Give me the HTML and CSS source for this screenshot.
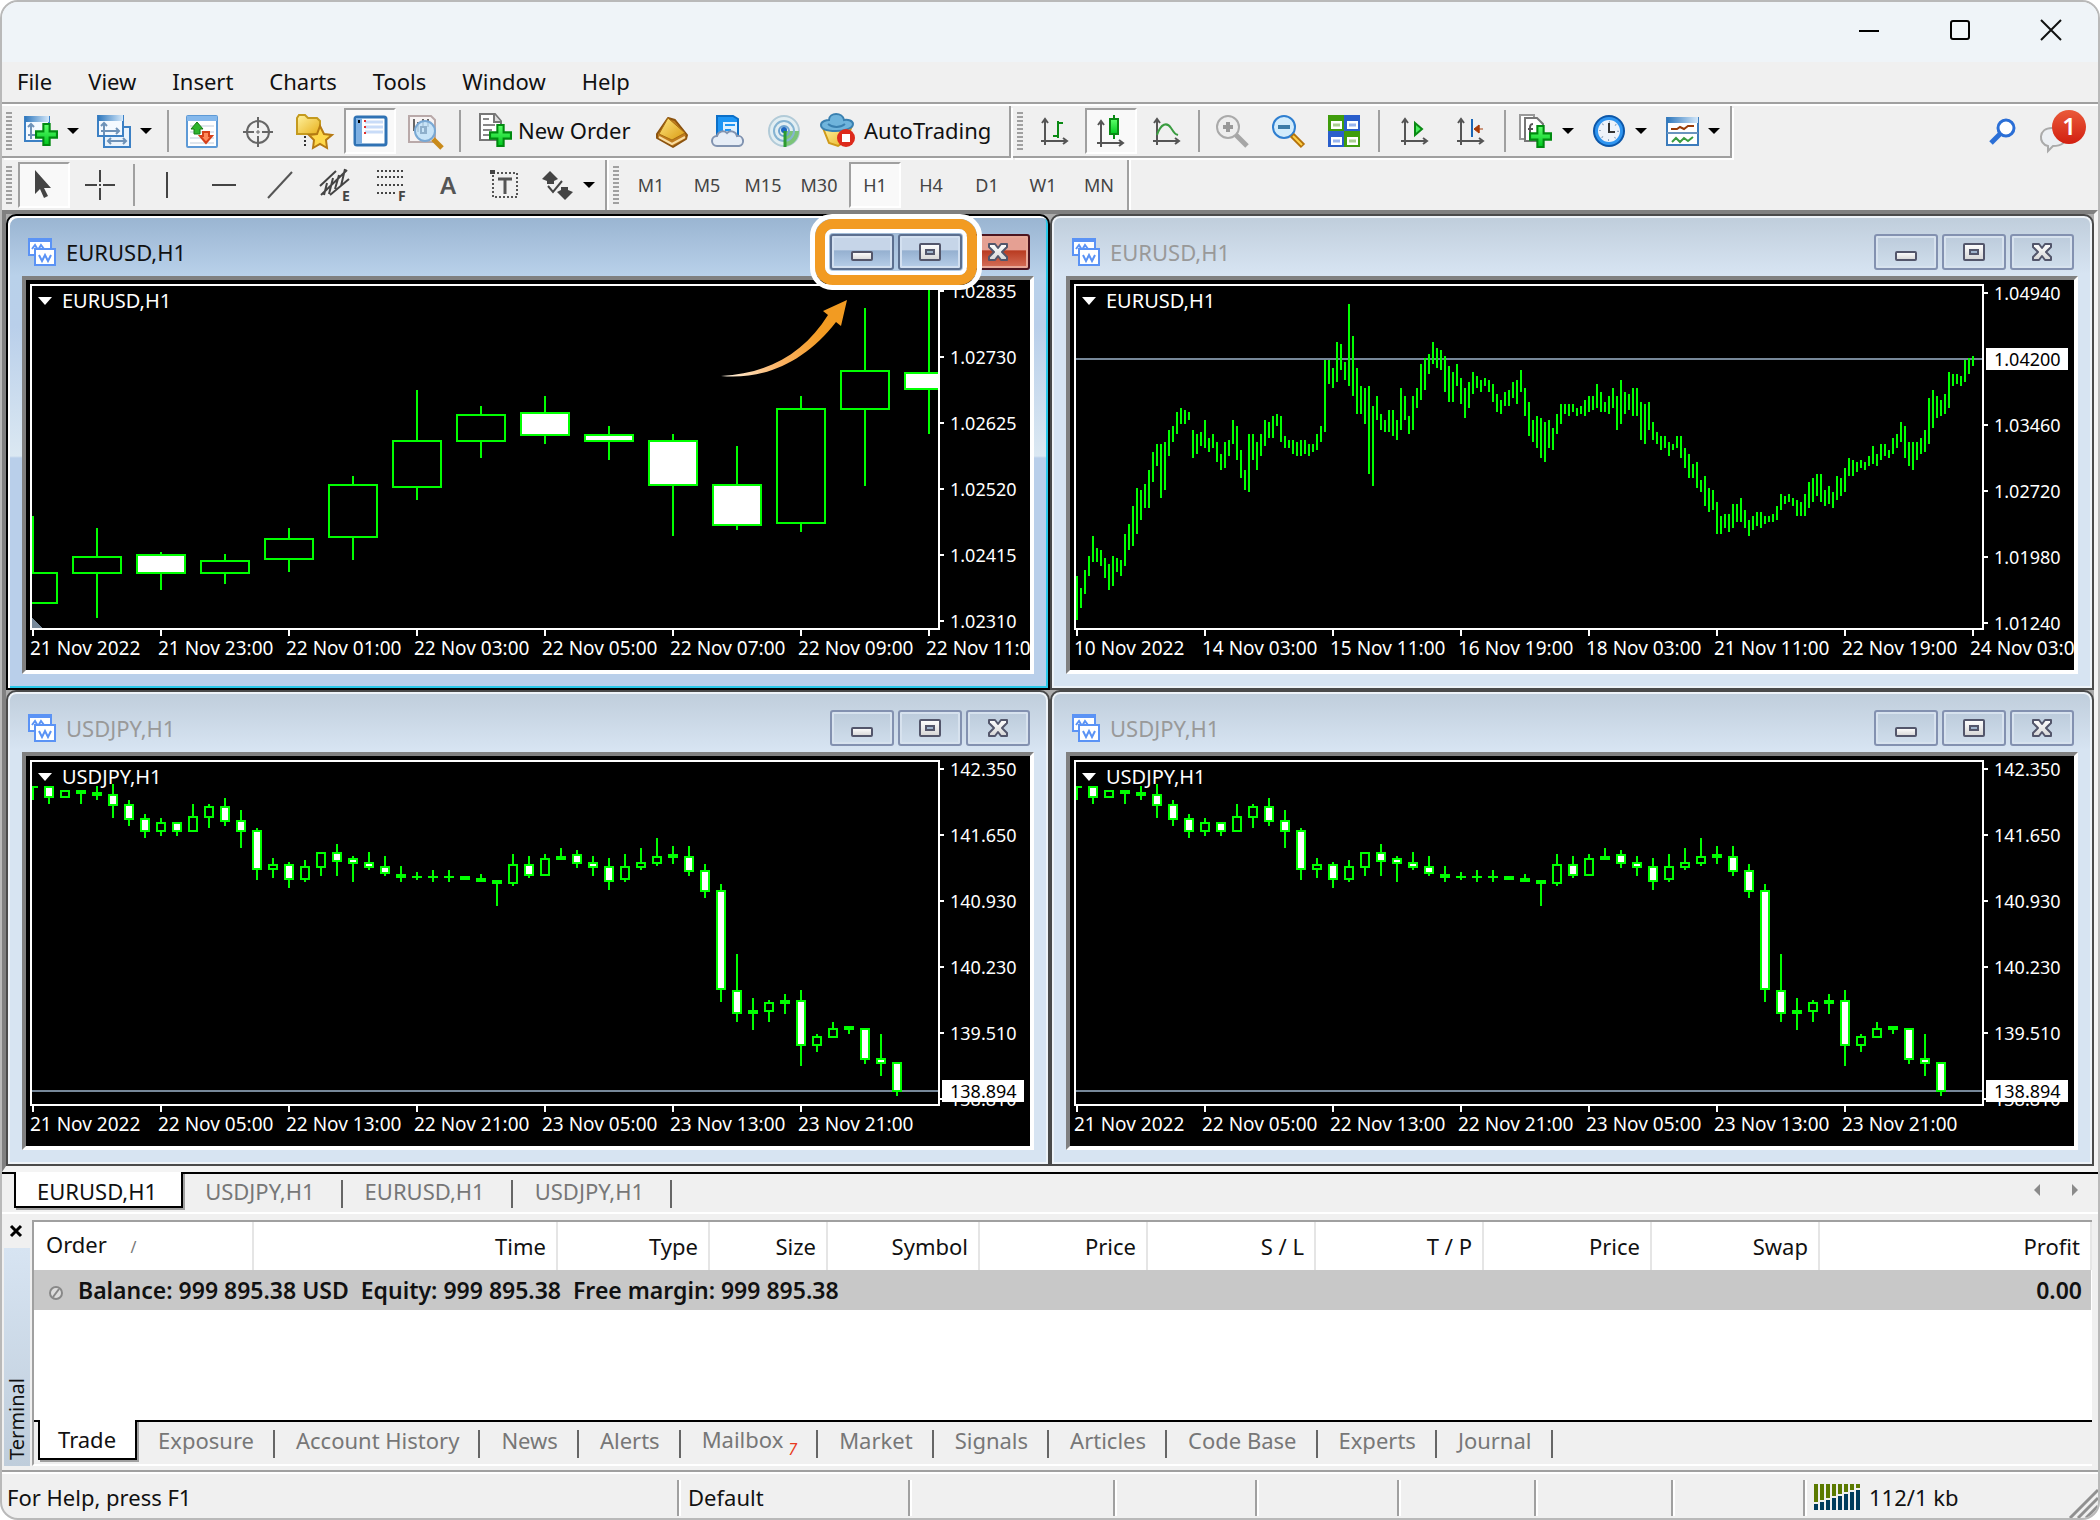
FILE: index.html
```html
<!DOCTYPE html>
<html lang="en">
<head>
<meta charset="utf-8">
<title>EURUSD,H1</title>
<link rel="stylesheet" href="styles.css">
</head>
<body>
<svg class="defs" aria-hidden="true">
  <defs>
    <linearGradient id="g-green" x1="0" y1="0" x2="0" y2="1"><stop offset="0" stop-color="#5dff6b"/><stop offset="1" stop-color="#00c81e"/></linearGradient>
    <linearGradient id="g-gold" x1="0" y1="0" x2="1" y2="1"><stop offset="0" stop-color="#fff3a0"/><stop offset="1" stop-color="#e8b01c"/></linearGradient>
    <linearGradient id="g-book" x1="0" y1="0" x2="1" y2="1"><stop offset="0" stop-color="#ffe680"/><stop offset="1" stop-color="#d99a10"/></linearGradient>
    <linearGradient id="g-glyph" x1="0" y1="0" x2="0" y2="1"><stop offset="0" stop-color="#fff"/><stop offset="1" stop-color="#d6d6d6"/></linearGradient>
    <linearGradient id="g-head" x1="0" y1="0" x2="1" y2="0"><stop offset="0" stop-color="#2f78bd"/><stop offset="1" stop-color="#d4e8fa"/></linearGradient>
    <linearGradient id="g-badge" x1="0" y1="0" x2="0" y2="1"><stop offset="0" stop-color="#ea5a3a"/><stop offset="1" stop-color="#d21f10"/></linearGradient>
    <linearGradient id="g-arrow" gradientUnits="userSpaceOnUse" x1="0" y1="76" x2="100" y2="30"><stop offset="0" stop-color="#fff6e6"/><stop offset=".5" stop-color="#fbb469"/><stop offset="1" stop-color="#f29b22"/></linearGradient>
    <symbol id="i-caret" viewBox="0 0 12 6"><path d="M0 0h12l-6 6z" fill="#000"/></symbol>
    <symbol id="i-plus" viewBox="0 0 22 22"><path d="M8 1h6v7h7v6h-7v7H8v-7H1V8h7z" fill="url(#g-green)" stroke="#008a10" stroke-width="2"/></symbol>
    <symbol id="i-axes" viewBox="0 0 28 28"><path d="M4 2v26M0 24h26M1 6l3-4 3 4M22 21l4 3-4 3" fill="none" stroke="#555" stroke-width="2"/></symbol>
    <symbol id="i-chartwin" viewBox="0 0 28 28"><path d="M1 1h22v16H1z" fill="#fff" stroke="#5b93f5" stroke-width="2"/><path d="M1 2h22" stroke="#5b93f5" stroke-width="4"/><path d="M4 11l3-4 3 5 3-5 3 4" fill="none" stroke="#5b93f5" stroke-width="2"/><path d="M7 11h20v16H7z" fill="#fff" stroke="#5b93f5" stroke-width="2"/><path d="M11 17l3 6 3-6 3 6 3-6" fill="none" stroke="#5b93f5" stroke-width="2"/></symbol>
    <symbol id="w-min" viewBox="0 0 22 18"><rect x="1" y="9" width="20" height="8" rx="1" fill="url(#g-glyph)" stroke="#53566b" stroke-width="2"/></symbol>
    <symbol id="w-max" viewBox="0 0 22 18"><rect x="1" y="1" width="20" height="16" rx="1" fill="url(#g-glyph)" stroke="#53566b" stroke-width="2"/><rect x="7" y="7" width="8" height="4" fill="#9fb4cc" stroke="#53566b" stroke-width="2"/></symbol>
    <symbol id="w-close" viewBox="0 0 22 18"><path d="M2 1h6l3 4 3-4h6v3l-5 5 5 5v3h-6l-3-4-3 4H2v-3l5-5-5-5z" fill="url(#g-glyph)" stroke="#53566b" stroke-width="2" stroke-linejoin="round"/></symbol>
  </defs>
</svg>

<div class="app">
  <header class="titlebar">
    <button class="sys" aria-label="Minimize"><svg width="20" height="20" viewBox="0 0 20 20"><path d="M0 11h20" stroke="#000" stroke-width="2"/></svg></button>
    <button class="sys" aria-label="Maximize"><svg width="20" height="20" viewBox="0 0 20 20"><rect x="1" y="1" width="18" height="18" rx="2" fill="none" stroke="#000" stroke-width="2"/></svg></button>
    <button class="sys" aria-label="Close"><svg width="20" height="20" viewBox="0 0 20 20"><path d="M0 0l20 20M20 0L0 20" stroke="#111" stroke-width="2"/></svg></button>
  </header>

  <nav class="menu">
    <button>File</button><button>View</button><button>Insert</button><button>Charts</button><button>Tools</button><button>Window</button><button>Help</button>
  </nav>

  <div class="toolbar">
    <div class="band">
      <span class="grip"></span>
      <button class="tool split" aria-label="New chart"><svg class="icon" viewBox="0 0 34 34"><path d="M1 3h24v24H1z" fill="#f4f9ff" stroke="#3c80c4" stroke-width="2"/><path d="M1 2h24v6H1z" fill="url(#g-head)"/><path d="M7 10v15M4 13l3-3 3 3M4 21h8" fill="none" stroke="#6e92b8" stroke-width="2"/><use href="#i-plus" x="11" y="9" width="23" height="23"/></svg><svg class="caret"><use href="#i-caret"/></svg></button>
      <button class="tool split" aria-label="Profiles"><svg class="icon" viewBox="0 0 34 34"><path d="M7 13h26v20H7z" fill="#eaf3fc" stroke="#3c80c4" stroke-width="2"/><path d="M11 27h18M14 24l-3 3 3 3M26 24l3 3-3 3" fill="none" stroke="#6e92b8" stroke-width="2"/><path d="M1 2h25v20H1z" fill="#f4f9ff" stroke="#3c80c4" stroke-width="2"/><path d="M1 1h25v6H1z" fill="url(#g-head)"/><path d="M7 9v12M4 17h18M19 14l3 3-3 3M4 12l3-3 3 3" fill="none" stroke="#6e92b8" stroke-width="2"/></svg><svg class="caret"><use href="#i-caret"/></svg></button>
      <span class="sep"></span>
      <button class="tool" aria-label="Market Watch"><svg class="icon" viewBox="0 0 34 34"><rect x="2" y="2" width="30" height="31" rx="1" fill="#fff" stroke="#5e9ad6" stroke-width="2"/><path d="M2 2h30v5H2z" fill="#86b9ec"/><path d="M5 12h24M5 18h24M5 24h24M5 29h24" stroke="#dfe5ec" stroke-width="2"/><path d="M12 8l6 7h-3v5H9v-5H6z" fill="#2fb52c" stroke="#177c14"/><path d="M21 29l-6-7h3v-4h6v4h3z" fill="#ff8a5c" stroke="#d6401a" stroke-width="2"/></svg></button>
      <button class="tool" aria-label="Data Window"><svg class="icon" viewBox="0 0 34 34"><circle cx="17" cy="18" r="11" fill="none" stroke="#666" stroke-width="2"/><path d="M17 3v11M17 22v11M2 18h11M21 18h11" stroke="#666" stroke-width="2"/><path d="M15 18h4M17 16v4" stroke="#666"/></svg></button>
      <button class="tool" aria-label="Navigator"><svg class="icon wide" viewBox="0 0 36 34"><path d="M1 18V4l2-3h6l3 3h9l3 3v13H1z" fill="url(#g-gold)" stroke="#c49a1e" stroke-width="2"/><path d="M9 22v11" stroke="#333" stroke-width="2" stroke-dasharray="2 2"/><path d="M24 12l4 8 8 1-6 5 1 8-7-4-7 4 1-8-5-5 8-1z" fill="#ffd84a" stroke="#b67a12" stroke-width="2"/></svg></button>
      <button class="tool on" aria-label="Terminal"><svg class="icon" viewBox="0 0 34 34"><rect x="2" y="3" width="31" height="28" rx="2" fill="#fff" stroke="#2f72b4" stroke-width="3"/><path d="M3 4h6v26H3z" fill="#7eb0e2"/><path d="M12 8h18M12 13h18M12 18h18" stroke="#c9dcf8" stroke-width="3"/><path d="M6 6v3" stroke="#000" stroke-width="2"/><path d="M12 6v16" stroke="#e03030" stroke-width="2" stroke-dasharray="2 4"/></svg></button>
      <button class="tool" aria-label="Strategy Tester"><svg class="icon wide" viewBox="0 0 36 34"><path d="M1 2h22l4 4v22H1z" fill="#f7f3f3" stroke="#b9a9a9" stroke-width="2"/><path d="M6 5v12M10 8v10M15 5v8M20 5v8" stroke="#666" stroke-width="2"/><circle cx="17" cy="17" r="10" fill="#bfe0f8" fill-opacity=".85" stroke="#79a8d4" stroke-width="2"/><path d="M13 19v-6h4v6zM18 12v8" fill="none" stroke="#8fb0cc" stroke-width="2"/><path d="M25 25l9 9" stroke="#c98a1a" stroke-width="5"/></svg></button>
      <span class="sep"></span>
      <button class="tool text order"><svg class="icon" viewBox="0 0 34 34"><path d="M2 1h15l6 7v19H2z" fill="#fff" stroke="#777" stroke-width="2"/><path d="M16 1v8h7" fill="#ddd" stroke="#777" stroke-width="2"/><path d="M5 6h6M5 12h12M5 17h9M5 22h7" stroke="#888" stroke-width="2"/><use href="#i-plus" x="11" y="11" width="23" height="23"/></svg>New Order</button>
      <button class="tool" aria-label="MetaEditor"><svg class="icon" viewBox="0 0 34 34"><path d="M13 4l7 2 12 15-1 4-13 8L2 24v-4z" fill="#c07c1e" stroke="#8c5410" stroke-width="2" stroke-linejoin="round"/><path d="M13 4l17 15-13 7L4 20z" fill="url(#g-book)" stroke="#a86c12"/><path d="M4 23l13 7 13-7" fill="none" stroke="#f8dca0" stroke-width="2"/></svg></button>
      <button class="tool" aria-label="Virtual hosting"><svg class="icon" viewBox="0 0 34 34"><path d="M6 2h16l5 3v18H6z" fill="#1e96f5" stroke="#0b6fc8" stroke-width="2"/><path d="M12 8h14v14H12z" fill="#dff1ff"/><path d="M14 11h10M14 16h6" stroke="#1e96f5" stroke-width="2"/><path d="M6 32a5 5 0 0 1 0-10 6 6 0 0 1 10-3 6 6 0 0 1 10 3 5 5 0 0 1 2 10z" fill="#e6edf6" stroke="#8193b0" stroke-width="2"/></svg></button>
      <button class="tool" aria-label="Signals"><svg class="icon" viewBox="0 0 34 34"><circle cx="17" cy="17" r="15" fill="#e2eef2" stroke="#b2cbd8" stroke-width="2"/><path d="M17 17h15a15 15 0 0 1-13 15z" fill="#7cc478"/><circle cx="17" cy="17" r="10" fill="none" stroke="#86b4d2" stroke-width="2"/><circle cx="17" cy="17" r="5" fill="none" stroke="#6fa4d0" stroke-width="2"/><circle cx="17" cy="16" r="3" fill="#1c66c0"/><path d="M18 17v16" stroke="#2c9b30" stroke-width="3"/></svg></button>
      <button class="tool text auto"><svg class="icon wide" viewBox="0 0 36 34"><path d="M3 15h28l-4 12-9 6-9-3z" fill="url(#g-gold)" stroke="#cf9a1a" stroke-width="2"/><path d="M1 12c0-4 6-5 8-5 0-8 14-8 15 0 4-1 9 1 9 4 0 5-10 7-17 7S1 17 1 12z" fill="#6fb4dc" stroke="#3a80b0" stroke-width="2"/><path d="M8 11c5 4 12 4 17 0" fill="none" stroke="#3a80b0" stroke-width="2"/><circle cx="26" cy="25" r="9" fill="#dd2a1c"/><rect x="22" y="21" width="8" height="8" fill="#fff"/></svg>AutoTrading</button>
    </div>
    <div class="band">
      <span class="grip"></span>
      <button class="tool" aria-label="Bar Chart"><svg class="icon small" viewBox="0 0 28 28"><use href="#i-axes" width="28" height="28"/><path d="M17 4v17M17 6h5M12 19h5" stroke="#0a8a14" stroke-width="2"/></svg></button>
      <button class="tool on" aria-label="Candlesticks"><svg class="icon small" viewBox="0 0 28 32"><use href="#i-axes" y="4" width="28" height="28"/><path d="M17 0v24" stroke="#0a8a14" stroke-width="2"/><rect x="13" y="4" width="8" height="15" fill="url(#g-green)" stroke="#0a8a14" stroke-width="2"/></svg></button>
      <button class="tool" aria-label="Line Chart"><svg class="icon small" viewBox="0 0 28 28"><use href="#i-axes" width="28" height="28"/><path d="M4 18C8 6 14 5 18 11s4 6 7 7" fill="none" stroke="#3a9c40" stroke-width="2"/></svg></button>
      <span class="sep near"></span>
      <button class="tool" aria-label="Zoom In"><svg class="icon" viewBox="0 0 34 34"><circle cx="13" cy="13" r="11" fill="#eee" stroke="#aaa" stroke-width="2"/><path d="M13 8v10M8 13h10" stroke="#999" stroke-width="4"/><path d="M21 21l11 11" stroke="#a6a6a6" stroke-width="5"/></svg></button>
      <button class="tool" aria-label="Zoom Out"><svg class="icon" viewBox="0 0 34 34"><circle cx="13" cy="13" r="11" fill="#d2ecfc" stroke="#2f7fd0" stroke-width="2"/><path d="M7 13h12" stroke="#3c7ca8" stroke-width="4"/><path d="M21 21l11 11" stroke="#b5720a" stroke-width="6"/><path d="M22 22l9 9" stroke="#ffd24a" stroke-width="2"/></svg></button>
      <button class="tool" aria-label="Tile Windows"><svg class="icon" viewBox="0 0 34 34"><path d="M1 1h16v16H1zM17 17h16v16H17z" fill="#3f9c0c"/><path d="M17 1h16v16H17zM1 17h16v16H1z" fill="#2a5ecb"/><path d="M4 7h11v8H4zM20 7h11v8H20zM4 23h11v8H4zM20 23h11v8H20z" fill="#fff"/><path d="M6 11h7M22 27h7" stroke="#a9cf90" stroke-width="3"/><path d="M22 11h7M6 27h7" stroke="#98b4ee" stroke-width="3"/></svg></button>
      <span class="sep far"></span>
      <button class="tool" aria-label="Auto Scroll"><svg class="icon small" viewBox="0 0 28 28"><use href="#i-axes" width="28" height="28"/><path d="M14 6l7 6-7 6z" fill="#4cf060" stroke="#0a8a14" stroke-width="2"/></svg></button>
      <button class="tool" aria-label="Chart Shift"><svg class="icon small" viewBox="0 0 28 28"><use href="#i-axes" width="28" height="28"/><path d="M15 2v18" stroke="#1c66b4" stroke-width="2"/><path d="M18 12h8M22 8v8M17 12l5-4v8z" fill="#a83c08" stroke="#a83c08"/></svg></button>
      <span class="sep"></span>
      <button class="tool split" aria-label="Indicators"><svg class="icon" viewBox="0 0 34 34"><path d="M1 1h14v24H1z" fill="#fff" stroke="#999" stroke-width="2"/><path d="M6 4h12l6 6v17H6z" fill="#fff" stroke="#777" stroke-width="2"/><path d="M14 10c-3 0-3 2-3 5v5M9 15h5" fill="none" stroke="#555" stroke-width="2"/><use href="#i-plus" x="10" y="11" width="23" height="23"/></svg><svg class="caret"><use href="#i-caret"/></svg></button>
      <button class="tool split" aria-label="Periods"><svg class="icon" viewBox="0 0 34 34"><circle cx="17" cy="17" r="16" fill="#0c56a8"/><circle cx="17" cy="17" r="14" fill="#2f95f0"/><circle cx="17" cy="17" r="11" fill="#eef3fa"/><path d="M17 9v9h6" fill="none" stroke="#333" stroke-width="2"/><circle cx="17" cy="17" r="9" fill="none" stroke="#8fa3bb" stroke-width="2" stroke-dasharray="1 6"/></svg><svg class="caret"><use href="#i-caret"/></svg></button>
      <button class="tool split" aria-label="Templates"><svg class="icon" viewBox="0 0 34 34"><path d="M2 4h31v27H2z" fill="#fff" stroke="#3c7cbc" stroke-width="2"/><path d="M2 3h31v6H2z" fill="url(#g-head)"/><path d="M2 19h31" stroke="#6a94be" stroke-width="2"/><path d="M6 15h6l3-2 4 2 4-3h6" fill="none" stroke="#9a3c08" stroke-width="2"/><path d="M7 28l4-4 4 4 4-4 4 3 5-4" fill="none" stroke="#3a9c40" stroke-width="2"/></svg><svg class="caret"><use href="#i-caret"/></svg></button>
    </div>
    <div class="corner">
      <button class="plain" aria-label="Search"><svg width="28" height="28" viewBox="0 0 28 28"><circle cx="18" cy="10" r="8" fill="#fff" stroke="#2b6fd6" stroke-width="3"/><path d="M12 16L3 25" stroke="#2b6fd6" stroke-width="5"/></svg></button>
      <button class="plain" aria-label="Messages"><svg width="46" height="42" viewBox="0 0 46 42"><path d="M12 18c-14 0-14 16-4 18v5l5-5c18 0 18-18-1-18z" fill="#eceff3" stroke="#aaa" stroke-width="2"/><circle cx="29" cy="17" r="17" fill="url(#g-badge)"/><text class="badge" x="29" y="25" text-anchor="middle">1</text></svg></button>
    </div>
  </div>

  <div class="toolbar second">
    <div class="band">
      <span class="grip"></span>
      <button class="tool on" aria-label="Cursor"><svg class="icon" viewBox="0 0 34 34"><path d="M8 2v24l5-5 4 9 4-2-4-8h7z" fill="#444"/></svg></button>
      <button class="tool" aria-label="Crosshair"><svg class="icon" viewBox="0 0 34 34"><path d="M17 2v12M17 20v12M2 17h12M20 17h12M16 17h2" stroke="#444" stroke-width="2"/></svg></button>
      <span class="sep"></span>
      <button class="tool" aria-label="Vertical line"><svg class="icon" viewBox="0 0 34 34"><path d="M16 4v26" stroke="#444" stroke-width="2"/></svg></button>
      <button class="tool" aria-label="Horizontal line"><svg class="icon" viewBox="0 0 34 34"><path d="M5 17h24" stroke="#444" stroke-width="2"/></svg></button>
      <button class="tool" aria-label="Trendline"><svg class="icon" viewBox="0 0 34 34"><path d="M5 30L29 4" stroke="#555" stroke-width="2"/></svg></button>
      <button class="tool" aria-label="Equidistant channel"><svg class="icon" viewBox="0 0 34 34"><path d="M1 18L17 3M2 27L28 2M11 27L30 11M8 15l-3 12M14 10l-4 16M20 7l-4 14M26 1l-4 17" fill="none" stroke="#444" stroke-width="2"/><text class="mark" x="23" y="33">E</text></svg></button>
      <button class="tool" aria-label="Fibonacci"><svg class="icon" viewBox="0 0 34 34"><path d="M2 3h28M2 9h28M2 17h28M2 25h18" stroke="#444" stroke-width="2" stroke-dasharray="2 2"/><text class="mark" x="23" y="33">F</text></svg></button>
      <button class="tool" aria-label="Text"><svg class="icon" viewBox="0 0 34 34"><text class="letter" x="17" y="26" text-anchor="middle">A</text></svg></button>
      <button class="tool" aria-label="Text label"><svg class="icon" viewBox="0 0 34 34"><rect x="6" y="5" width="24" height="24" fill="none" stroke="#555" stroke-width="2" stroke-dasharray="2 2"/><path d="M3 2h5v4H3z" fill="#444"/><path d="M11 11h14M18 11v15" stroke="#555" stroke-width="3"/></svg></button>
      <button class="tool split" aria-label="Arrows"><svg class="icon" viewBox="0 0 34 34"><path d="M10 3l8 8-4 2v3H7v-3l-5-2zM25 32l-8-8 4-2v-3h7v3l5 2z" fill="#444"/><path d="M8 18l5 6 9-11" fill="none" stroke="#444" stroke-width="2"/></svg><svg class="caret"><use href="#i-caret"/></svg></button>
    </div>
    <div class="band">
      <span class="grip"></span>
      <button class="tool">M1</button><button class="tool">M5</button><button class="tool">M15</button><button class="tool">M30</button><button class="tool on">H1</button><button class="tool">H4</button><button class="tool">D1</button><button class="tool">W1</button><button class="tool">MN</button>
    </div>
  </div>

  <main class="desk">
    <section class="win active">
      <header class="caption"><svg class="badge-icon"><use href="#i-chartwin"/></svg><h2>EURUSD,H1</h2>
        <button class="cap" aria-label="Minimize"><svg><use href="#w-min"/></svg></button><button class="cap" aria-label="Maximize"><svg><use href="#w-max"/></svg></button><button class="cap close" aria-label="Close"><svg><use href="#w-close"/></svg></button></header>
      <div class="chart">
        <div class="plot"><svg class="series" viewBox="0 0 453 171" data-series="zoomed"></svg><span class="legend">EURUSD,H1</span></div>
        <ol class="prices"><li>1.02835</li><li>1.02730</li><li>1.02625</li><li>1.02520</li><li>1.02415</li><li>1.02310</li></ol>
        <ol class="times"><li>21 Nov 2022</li><li>21 Nov 23:00</li><li>22 Nov 01:00</li><li>22 Nov 03:00</li><li>22 Nov 05:00</li><li>22 Nov 07:00</li><li>22 Nov 09:00</li><li>22 Nov 11:00</li></ol>
      </div>
      <div class="callout"></div>
      <svg class="pointer" viewBox="0 0 128 78"><path d="M0 76C48 74 84 52 107 15L102 11L126 0L120 26L115 22C84 62 44 80 0 76z" fill="url(#g-arrow)"/></svg>
    </section>

    <section class="win">
      <header class="caption"><svg class="badge-icon"><use href="#i-chartwin"/></svg><h2>EURUSD,H1</h2>
        <button class="cap" aria-label="Minimize"><svg><use href="#w-min"/></svg></button><button class="cap" aria-label="Maximize"><svg><use href="#w-max"/></svg></button><button class="cap" aria-label="Close"><svg><use href="#w-close"/></svg></button></header>
      <div class="chart">
        <div class="plot"><svg class="series" viewBox="0 0 453 171" data-series="bars"></svg><span class="legend">EURUSD,H1</span></div>
        <ol class="prices low"><li>1.04940</li><li class="current">1.04200</li><li>1.03460</li><li>1.02720</li><li>1.01980</li><li>1.01240</li></ol>
        <ol class="times"><li>10 Nov 2022</li><li>14 Nov 03:00</li><li>15 Nov 11:00</li><li>16 Nov 19:00</li><li>18 Nov 03:00</li><li>21 Nov 11:00</li><li>22 Nov 19:00</li><li>24 Nov 03:00</li></ol>
      </div>
    </section>

    <section class="win">
      <header class="caption"><svg class="badge-icon"><use href="#i-chartwin"/></svg><h2>USDJPY,H1</h2>
        <button class="cap" aria-label="Minimize"><svg><use href="#w-min"/></svg></button><button class="cap" aria-label="Maximize"><svg><use href="#w-max"/></svg></button><button class="cap" aria-label="Close"><svg><use href="#w-close"/></svg></button></header>
      <div class="chart">
        <div class="plot"><svg class="series" viewBox="0 0 453 171" data-series="usdjpy"></svg><span class="legend">USDJPY,H1</span></div>
        <ol class="prices low"><li>142.350</li><li>141.650</li><li>140.930</li><li>140.230</li><li>139.510</li><li>138.810</li><li class="current last">138.894</li></ol>
        <ol class="times"><li>21 Nov 2022</li><li>22 Nov 05:00</li><li>22 Nov 13:00</li><li>22 Nov 21:00</li><li>23 Nov 05:00</li><li>23 Nov 13:00</li><li>23 Nov 21:00</li></ol>
      </div>
    </section>

    <section class="win">
      <header class="caption"><svg class="badge-icon"><use href="#i-chartwin"/></svg><h2>USDJPY,H1</h2>
        <button class="cap" aria-label="Minimize"><svg><use href="#w-min"/></svg></button><button class="cap" aria-label="Maximize"><svg><use href="#w-max"/></svg></button><button class="cap" aria-label="Close"><svg><use href="#w-close"/></svg></button></header>
      <div class="chart">
        <div class="plot"><svg class="series" viewBox="0 0 453 171" data-series="usdjpy"></svg><span class="legend">USDJPY,H1</span></div>
        <ol class="prices low"><li>142.350</li><li>141.650</li><li>140.930</li><li>140.230</li><li>139.510</li><li>138.810</li><li class="current last">138.894</li></ol>
        <ol class="times"><li>21 Nov 2022</li><li>22 Nov 05:00</li><li>22 Nov 13:00</li><li>22 Nov 21:00</li><li>23 Nov 05:00</li><li>23 Nov 13:00</li><li>23 Nov 21:00</li></ol>
      </div>
    </section>
  </main>

  <nav class="tabs charts">
    <button class="tab current">EURUSD,H1</button><button class="tab">USDJPY,H1</button><button class="tab">EURUSD,H1</button><button class="tab">USDJPY,H1</button>
    <span class="scroll"><button class="plain" aria-label="Scroll left"><svg width="6" height="12" viewBox="0 0 6 12"><path d="M6 0v12L0 6z" fill="#8a8a8a"/></svg></button><button class="plain" aria-label="Scroll right"><svg width="6" height="12" viewBox="0 0 6 12"><path d="M0 0v12l6-6z" fill="#8a8a8a"/></svg></button></span>
  </nav>

  <section class="terminal">
    <aside class="side">
      <button class="plain x" aria-label="Close terminal"><svg width="12" height="10" viewBox="0 0 12 10"><path d="M1 0l10 10M11 0L1 10" stroke="#000" stroke-width="3"/></svg></button>
      <div class="strip"><span>Terminal</span></div>
    </aside>
    <div class="panel">
      <div class="list">
        <table>
          <colgroup><col class="c-order"><col class="c-time"><col class="c-type"><col class="c-size"><col class="c-type"><col class="c-price"><col class="c-price"><col class="c-price"><col class="c-price"><col class="c-price"><col></colgroup>
          <thead><tr><th class="first">Order <span class="sort">/</span></th><th>Time</th><th>Type</th><th>Size</th><th>Symbol</th><th>Price</th><th>S / L</th><th>T / P</th><th>Price</th><th>Swap</th><th>Profit</th></tr></thead>
          <tbody><tr><td colspan="10" class="first"><svg width="16" height="18" viewBox="0 0 16 18"><circle cx="8" cy="9" r="6" fill="#ddd" stroke="#888" stroke-width="2"/><path d="M5 13l6-8" stroke="#888" stroke-width="2"/></svg><span class="sum">Balance: 999 895.38 USD&nbsp; Equity: 999 895.38&nbsp; Free margin: 999 895.38</span></td><td>0.00</td></tr></tbody>
        </table>
      </div>
      <nav class="tabs sections">
        <button class="tab current">Trade</button><button class="tab">Exposure</button><button class="tab">Account History</button><button class="tab">News</button><button class="tab">Alerts</button><button class="tab">Mailbox<sub>7</sub></button><button class="tab">Market</button><button class="tab">Signals</button><button class="tab">Articles</button><button class="tab">Code Base</button><button class="tab">Experts</button><button class="tab">Journal</button>
      </nav>
    </div>
  </section>

  <footer class="status">
    <span class="cell help">For Help, press F1</span><span class="cell s1">Default</span><span class="cell s2"></span><span class="cell s3"></span><span class="cell s3"></span><span class="cell s4"></span><span class="cell s4"></span><span class="cell s5"></span>
    <span class="cell net"><svg width="46" height="26" viewBox="0 0 46 26"><path d="M2 0v18M8 0v16M14 0v14M20 0v12M26 0v10M32 0v8M38 0v6M44 0v4" stroke="#5b7a00" stroke-width="4"/><path d="M2 26v-6M8 26v-8M14 26V16M20 26V14M26 26V12M32 26V10M38 26V8M44 26V6" stroke="#003c5c" stroke-width="4"/></svg>112/1 kb</span>
    <svg class="sizer" viewBox="0 0 30 30"><path d="M2 30L30 2M10 30L30 10M18 30L30 18" stroke="#909090" stroke-width="3"/></svg>
  </footer>
</div>
<script src="script.js"></script>
</body>
</html>
```
FILE: styles.css
```css
* { box-sizing: border-box; }
body { margin: 0; background: #fff; color: #111; font: 22px/30px "Noto Sans", "Open Sans", sans-serif; }
button { margin: 0; padding: 0; border: 0; background: none; color: inherit; font: inherit; }
h2, ol { margin: 0; padding: 0; font: inherit; list-style: none; }
svg { display: block; flex: none; overflow: visible; }
.defs { position: absolute; width: 0; height: 0; }

.app { display: flex; flex-direction: column; min-height: 100vh; border: 2px solid #b9b9b9; border-radius: 18px; background: #f0f0f0; overflow: hidden; }

.titlebar { display: flex; justify-content: flex-end; height: 60px; padding: 0 2px 4px 0; background: #eff4f8; }
.sys { display: flex; align-items: center; justify-content: center; width: 91px; }
.menu { display: flex; height: 42px; padding: 0 0 2px; border-bottom: 2px solid #a0a0a0; box-shadow: 0 2px #fff; }
.menu button { padding: 0 20px 0 16px; }
.menu button:first-child { padding-left: 15px; }

.toolbar { display: flex; height: 54px; padding-top: 2px; }
.toolbar.second { font-size: 18px; height: 52px; color: #444; }
.band { display: flex; align-items: center; border-right: 2px solid #a0a0a0; border-bottom: 2px solid #a0a0a0; box-shadow: 2px 2px #fff; }
.second .band { border-bottom: 0; box-shadow: 2px 0 #fff; }
.band + .band { margin-left: 2px; }
.grip { flex: none; width: 6px; height: 38px; margin: 0 4px; background: repeating-linear-gradient(#a0a0a0 0 2px, transparent 2px 4px); }
.sep { flex: none; width: 2px; height: 42px; margin: 0 5px; background: #a0a0a0; }
.sep.near { margin: 0 4px 0 3px; }
.sep.far { margin: 0 7px 0 6px; }
.tool { display: flex; align-items: center; justify-content: center; flex: none; width: 56px; height: 46px; }
.tool.on { width: 52px; margin: 0 2px; border: 2px solid; border-color: #a0a0a0 #fff #fff #a0a0a0; background: #f9f9f9; }
.tool.split { width: 73px; padding-left: 8px; justify-content: flex-start; gap: 9px; }
.tool.text { justify-content: flex-start; white-space: nowrap; line-height: 34px; padding-bottom: 2px; }
.tool.order { width: 178px; padding-left: 12px; gap: 6px; }
.tool.auto { width: 197px; padding-left: 8px; gap: 8px; }
.icon { width: 34px; height: 34px; }
.icon.wide { width: 36px; }
.icon.small { width: 28px; height: 32px; }
.caret { width: 12px; height: 6px; }
.mark { font-size: 14px; font-weight: 700; fill: #444; }
.letter { font-size: 24px; font-weight: 600; fill: #555; }
.corner { display: flex; gap: 24px; margin-left: auto; padding: 4px 12px 0 0; }
.plain { display: flex; align-items: center; }
.corner .plain { align-items: flex-start; }
.corner .plain:first-child { padding-top: 8px; }
.badge { font-size: 24px; font-weight: 600; fill: #fff; }

.desk { display: grid; grid-template-columns: 1fr 1fr; border: solid; border-width: 4px 4px 6px; border-color: #808080 #f4f4f4 #f4f4f4 #808080; background: #ababab; }
.win { position: relative; min-width: 0; padding: 2px 14px 14px; border: 2px solid #4a4a4a; border-radius: 10px 10px 0 0; box-shadow: inset 0 0 0 2px #eef3f8; background: linear-gradient(#bfcddb, #d7e4f2 58px); }
.win.active { border-color: #000; box-shadow: inset 2px 2px #fff, inset -2px -2px #2bc8e8; background: linear-gradient(#99b4d1, #b9d1ea 60px, #b9cfea 110px, #dbe8f2 240px, #b9cfea 242px); }
.caption { display: flex; align-items: center; gap: 4px; height: 58px; padding: 10px 4px 0; color: #999; }
.active .caption { color: #111; }
.badge-icon { width: 28px; height: 28px; margin-left: 2px; }
.caption h2 { flex: 1; padding-left: 6px; }
.cap { display: flex; align-items: center; justify-content: center; flex: none; width: 64px; height: 36px; border: 2px solid #8391b0; border-radius: 3px; box-shadow: inset 0 0 0 2px #d7e2ee; background: linear-gradient(#bccbdb, #d0deec); }
.cap svg { width: 22px; height: 18px; }
.active .cap { border-color: #5c6f8f; box-shadow: inset 0 0 0 2px #d3e0f0; background: linear-gradient(#c6d5e8 44%, #95b0d0 46%, #b8cfe9); }
.active .cap.close { border-color: #4c1520; box-shadow: inset 0 0 0 2px #e7a898; background: linear-gradient(#e5a093 44%, #b93b21 46%, #d5705a); }

.chart { display: grid; grid-template-columns: minmax(0, 1fr) 90px; padding: 4px 0 0 4px; border: 4px solid; border-color: #808080 #fff #fff #808080; background: #000; color: #fff; overflow: hidden; }
.plot { position: relative; border: 2px solid #fff; overflow: hidden; }
.series { width: 906px; height: 342px; shape-rendering: crispEdges; }
.legend { position: absolute; top: 1px; left: 6px; display: flex; align-items: center; gap: 10px; font-size: 20px; line-height: 28px; }
.legend::before { content: ""; border: 7px solid transparent; border-top: 8px solid #fff; border-bottom: 0; }
.prices { position: relative; display: flex; flex-direction: column; gap: 52px; font-size: 18px; line-height: 14px; }
.prices.low { padding-top: 2px; }
.prices li { display: flex; align-items: center; gap: 6px; height: 14px; }
.prices li::before { content: ""; width: 4px; height: 2px; background: #fff; }
.prices .current { height: 22px; width: 82px; margin: -4px 0 -4px 2px; padding-left: 8px; background: #fff; color: #000; }
.prices .current::before { display: none; }
.prices .last { position: absolute; top: 320px; margin: 0 0 0 2px; }
.times { grid-column: 1 / -1; display: flex; height: 40px; overflow: hidden; font-size: 19px; line-height: 24px; white-space: nowrap; }
.times li { flex: none; width: 128px; }
.times li::before { content: ""; display: block; width: 2px; height: 6px; margin-left: 2px; background: #fff; }

/* Highlight ring and arrow laid over the first chart window */
.callout { position: absolute; top: -2px; right: 66px; width: 172px; height: 76px; border: 5px solid #fff; border-radius: 22px; }
.callout::before { content: ""; position: absolute; inset: 0; border: 10px solid #f29b22; border-radius: 18px; }
.callout::after { content: ""; position: absolute; inset: 10px; border: 4px solid #fff; border-radius: 8px; }
.pointer { position: absolute; top: 84px; right: 199px; width: 128px; height: 78px; }

.tabs { display: flex; align-items: flex-start; border-top: 2px solid #000; color: #777; }
.tab { position: relative; flex: none; height: 36px; padding: 0 21px 2px; white-space: nowrap; }
.tab::after { content: ""; position: absolute; top: 6px; right: 0; width: 2px; height: 28px; background: #666; }
.tab.current { margin-top: -2px; border: 2px solid #000; border-top: 0; box-shadow: 2px 2px #a0a0a0; background: #fff; color: #111; }
.tab.current::after { display: none; }
.charts { height: 42px; padding-left: 12px; border-bottom: 2px solid #fff; }
.charts .tab { padding: 0 28px 2px 22px; }
.charts .tab.current { padding: 3px 24px 0 21px; }
.scroll { display: flex; gap: 32px; margin: 10px 20px 0 auto; }

.terminal { display: flex; flex: 1; padding: 6px 6px 4px 0; }
.side { display: flex; flex-direction: column; width: 30px; padding: 0 2px; }
.side .x { height: 28px; padding: 0 6px 6px; }
.strip { flex: 1; display: flex; align-items: flex-end; padding-bottom: 6px; background: linear-gradient(#d7e4f2, #bfcddb); }
.strip span { writing-mode: vertical-rl; transform: rotate(180deg); font-size: 20px; line-height: 26px; }
.panel { display: flex; flex-direction: column; flex: 1; border-left: 2px solid #a0a0a0; border-top: 2px solid #a0a0a0; border-bottom: 2px solid #fff; }
.list { flex: 1; background: #fff; }
table { width: 100%; border-collapse: collapse; table-layout: fixed; }
.c-order { width: 219px; } .c-time { width: 304px; } .c-type { width: 152px; } .c-size { width: 118px; } .c-price { width: 168px; }
th { height: 48px; padding: 0 10px 1px; border-right: 2px solid #e5e5e5; font-weight: 400; text-align: right; }
td { height: 40px; padding: 0 9px 1px; background: #c8c8c8; font-size: 23px; font-weight: 600; text-align: right; }
th.first { padding-left: 12px; text-align: left; }
.sort { margin-left: 18px; color: #777; font-size: 16px; }
td.first { text-align: left; padding-left: 14px; }
td svg { display: inline-block; vertical-align: -3px; margin-right: 14px; }
.sections { height: 44px; padding-left: 4px; }
.sections .tab { height: 40px; padding: 0 21px 4px; }
.sections .tab::after { top: 8px; }
.sections .tab.current { padding: 0 19px 0 18px; }
.tab sub { color: #e83a20; font-size: 16px; line-height: 16px; margin-left: 5px; font-style: italic; vertical-align: -7px; }

.status { position: relative; display: flex; height: 48px; padding: 8px 0 2px; border-top: 2px solid #a0a0a0; box-shadow: inset 0 2px #fff; }
.cell { display: flex; align-items: center; flex: none; padding: 0 0 2px 9px; border-left: 2px solid #a0a0a0; box-shadow: inset 2px 0 #fff; }
.cell.help { flex: 1; padding-left: 5px; border: 0; box-shadow: none; }
.s1 { width: 231px; } .s2 { width: 205px; } .s3 { width: 142px; } .s4 { width: 137px; } .s5 { width: 132px; }
.net { width: 295px; gap: 9px; }
.sizer { position: absolute; right: 0; bottom: 0; width: 30px; height: 30px; }
```
FILE: script.js
```js
// Candles on a 453 x 171 grid: high, body top, body bottom, low, kind (u = up, d = down).
const zoomed = `115 143 159 159 u;121 135 144 166 u;133 134 144 152 d;134 137 144 149 u;121 126 137 143 u;95 99 126 137 u;
52 77 101 107 u;60 64 78 86 u;55 63 75 79 d;70 74 78 87 d;74 77 100 125 d;80 99 120 122 d;55 61 119 123 u;11 42 62 100 u;0 43 52 74 d`;
const usdjpy = `12 12 13 19 u;12 12 18 21 d;14 14 18 18 u;14 14 16 21 d;12 15 17 19 d;11 16 22 28 d;19 21 29 32 d;26 28 35 38 d;
28 30 35 37 u;30 30 35 37 d;21 27 35 35 u;21 22 28 33 u;18 22 30 32 d;24 29 35 43 d;33 34 54 59 d;48 51 54 58 u;50 51 59 63 d;
49 52 59 60 u;45 45 53 57 u;41 45 50 57 d;47 48 51 60 d;45 50 53 54 d;47 52 56 57 d;52 56 58 60 d;55 57 58 59 d;54 57 58 60 d;
54 57 58 60 d;57 57 59 59 d;56 58 60 60 d;59 59 61 72 d;46 51 61 62 u;47 51 57 58 d;46 48 57 57 u;43 47 49 49 d;44 46 51 53 d;
47 50 53 57 d;48 52 60 64 d;46 52 59 60 u;43 50 53 54 u;38 47 51 52 u;42 46 48 51 d;42 47 55 57 d;51 54 65 68 d;61 64 114 120 d;
96 114 126 130 d;118 124 126 134 d;119 120 125 130 u;116 119 121 126 d;114 119 142 152 d;136 137 142 145 u;130 133 138 138 u;
132 132 134 136 d;133 133 149 151 d;136 148 151 157 d;150 150 165 167 d`;
// High-low bars of the compressed chart, in sixths of a grid row counted from 43 rows above the plot.
const bars = `1128-1260 1164-1224 1110-1182 1068-1128 1008-1086 1044-1086 1050-1098 1074-1134 1092-1170 1068-1158 1074-1116 1080-1128
1002-1098 972-1050 918-1038 864-1002 870-960 852-924 810-924 756-846 732-798 732-894 726-870 690-768 678-726 636-702 624-672 630-672
636-660 690-774 702-762 696-738 660-744 714-756 702-744 726-786 762-810 726-804 720-768 660-732 678-780 750-834 810-870 702-876
702-780 726-810 702-768 660-738 666-714 648-714 642-678 648-726 708-744 720-744 720-762 726-768 720-768 720-762 732-768 732-756
702-750 678-726 480-696 480-552 504-564 426-546 432-510 486-540 312-558 408-588 504-642 558-642 564-672 558-822 618-858 588-660
642-690 660-696 630-696 630-708 660-720 564-690 588-660 648-702 588-690 564-624 492-600 474-570 462-522 426-492 444-504 450-510
468-576 498-606 516-606 492-558 534-612 564-654 546-624 516-582 528-564 540-576 534-558 540-576 552-606 582-636 600-642 576-618
570-618 546-594 540-612 510-576 564-648 606-708 660-726 648-744 654-774 666-786 660-744 684-750 642-702 612-672 612-642 612-648
612-636 624-648 618-642 600-648 588-636 588-630 552-624 576-636 606-636 588-642 564-624 588-690 540-672 576-642 582-630 564-648
564-648 606-720 612-732 606-690 666-720 696-732 708-750 708-744 726-768 732-750 708-744 708-774 744-804 762-834 792-834 786-864
840-876 828-918 864-936 870-930 906-1002 948-1002 942-984 942-996 912-984 912-966 894-966 930-984 960-1008 948-990 936-978 936-984
948-972 948-966 942-966 918-960 882-930 888-912 882-906 894-918 900-948 906-948 882-948 846-924 834-906 822-888 822-906 870-918
858-912 876-924 828-900 834-888 804-876 774-828 780-828 786-816 780-804 786-810 768-798 738-792 762-798 732-780 732-768 750-774
714-762 702-744 666-726 678-774 726-798 726-810 726-780 714-762 690-756 594-732 570-684 588-654 600-648 582-642 516-624 522-558
522-552 528-558 480-546 474-522 468-498`;

const rect = (x, y, w, h, fill) => `<rect x="${x}" y="${y}" width="${w}" height="${h}" fill="${fill}"/>`;
const GREEN = '#00ff00';

function candles(data, step, half) {
  return data.split(';').map((row, i) => {
    const [high, top, bottom, low, kind] = row.trim().split(' ');
    const x = i * step;
    const width = half * 2 + 1;
    let out = rect(x, high, 1, low - high, GREEN) + rect(x - half, top, width, bottom - top, GREEN);
    if (bottom - top > 2) out += rect(x - half + 1, +top + 1, width - 2, bottom - top - 2, kind === 'd' ? '#fff' : '#000');
    return out;
  }).join('');
}

const draw = {
  zoomed: () => '<path d="M0 166l5 5H0z" fill="#778899"/>' + candles(zoomed, 32, 12),
  usdjpy: () => rect(0, 164, 453, 1, '#778899') + candles(usdjpy, 8, 2),
  bars: () => rect(0, 36, 453, 1, '#778899') + bars.split(/\s+/).map((bar, i) => {
    const [high, low] = bar.split('-').map(v => v / 6 - 43);
    return rect(i * 2, high, 1, low - high, GREEN);
  }).join('')
};

document.querySelectorAll('[data-series]').forEach(svg => { svg.innerHTML = draw[svg.dataset.series](); });
```
